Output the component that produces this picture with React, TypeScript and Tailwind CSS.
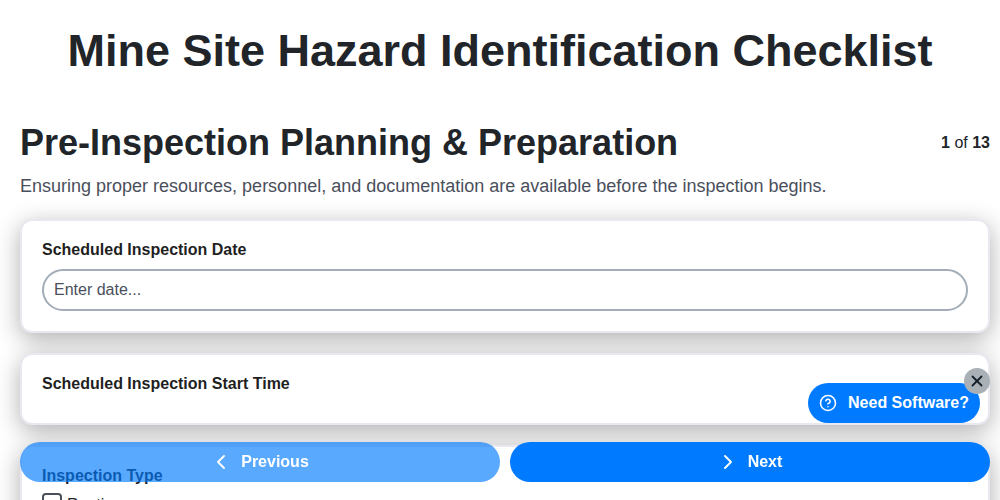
import { ChevronLeft, ChevronRight, CircleHelp, X } from "lucide-react";

function Card({ label, children, className }: { label: string; children?: React.ReactNode; className?: string }) {
  return (
    <div className={`rounded-xl border-2 border-[#e8e8f1] bg-white px-5 pt-[17px] shadow-[0_6px_24px_rgba(0,0,0,0.32)] ${className ?? ""}`}>
      <div className="text-base leading-[24px] font-bold text-[#1f1f1f]">{label}</div>
      {children}
    </div>
  );
}

export default function App() {
  return (
    <div className="h-[500px] overflow-hidden bg-white font-['Liberation_Sans',Arial,sans-serif] text-[#212529]">
      <h1 className="pt-[24px] text-center text-[45px] leading-[54px] font-bold">Mine Site Hazard Identification Checklist</h1>
      <div className="mt-[38px] flex items-start justify-between pr-[10px] pl-[20px]">
        <h2 className="text-[36px] leading-[54px] font-bold">Pre-Inspection Planning &amp; Preparation</h2>
        <div className="pt-[15px] text-base leading-[24px]"><b>1</b> of <b>13</b></div>
      </div>
      <p className="mt-[3px] pl-[20px] text-lg leading-[27px] text-[#4a4f5c]">
        Ensuring proper resources, personnel, and documentation are available before the inspection begins.
      </p>
      <div className="mt-[19px] mr-[10px] ml-[20px] flex flex-col gap-[20px]">
        <Card label="Scheduled Inspection Date" className="h-[114px]">
          <div className="mt-[7px] flex h-[42px] items-center rounded-full border-2 border-[#a3adb8] px-[10px] text-base text-[#4a4f5c]">Enter date...</div>
        </Card>
        <Card label="Scheduled Inspection Start Time" className="h-[72px]" />
        <Card label="Inspection Type" className="h-[100px]">
          <div className="mt-[5px] flex items-start gap-[5px] text-base leading-[24px]">
            <span className="h-[20px] w-[20px] rounded-[4px] border-2 border-[#4a4f5c]" />
            Routine
          </div>
        </Card>
      </div>
      <div className="fixed right-[10px] bottom-[18px] left-[20px] flex gap-[10px]">
        <button className="flex h-[40px] flex-1 items-center justify-center gap-[8px] rounded-full bg-[#007bff]/65 pr-[2px] text-base font-bold text-white">
          <ChevronLeft size={24} strokeWidth={1.9} /> Previous
        </button>
        <button className="flex h-[40px] flex-1 items-center justify-center gap-[8px] rounded-full bg-[#007bff] pr-[2px] text-base font-bold text-white">
          <ChevronRight size={24} strokeWidth={1.9} /> Next
        </button>
      </div>
      <div className="fixed top-[383px] right-[20px] flex h-[40px] w-[172px] items-center justify-center gap-[11px] rounded-full bg-[#007bff] text-base font-bold text-white">
        <CircleHelp size={18} strokeWidth={2.1} /> Need Software?
      </div>
      <div className="fixed top-[368px] right-[10px] flex h-[26px] w-[26px] items-center justify-center rounded-full bg-[#a9b1b7] text-[#15202b]">
        <X size={18} strokeWidth={2.4} />
      </div>
    </div>
  );
}
